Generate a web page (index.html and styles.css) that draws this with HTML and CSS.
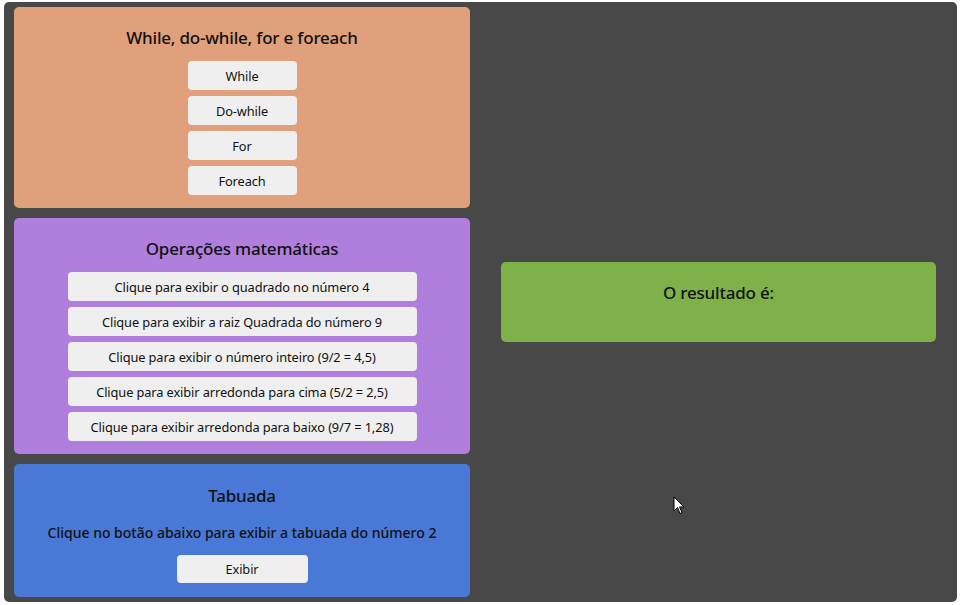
FILE: index.html
```html
<!DOCTYPE html>
<html lang="pt-BR">
<head>
<meta charset="utf-8">
<title>Estruturas</title>
<link rel="stylesheet" href="styles.css">
</head>
<body>
<main class="app">
  <section class="col-left">
    <div class="card card-orange">
      <h2 class="card-title">While, do-while, for e foreach</h2>
      <div class="btn-list">
        <button class="btn btn-small">While</button>
        <button class="btn btn-small">Do-while</button>
        <button class="btn btn-small">For</button>
        <button class="btn btn-small">Foreach</button>
      </div>
    </div>
    <div class="card card-purple">
      <h2 class="card-title">Operações matemáticas</h2>
      <div class="btn-list">
        <button class="btn btn-wide">Clique para exibir o quadrado no número 4</button>
        <button class="btn btn-wide">Clique para exibir a raiz Quadrada do número 9</button>
        <button class="btn btn-wide">Clique para exibir o número inteiro (9/2 = 4,5)</button>
        <button class="btn btn-wide">Clique para exibir arredonda para cima (5/2 = 2,5)</button>
        <button class="btn btn-wide">Clique para exibir arredonda para baixo (9/7 = 1,28)</button>
      </div>
    </div>
    <div class="card card-blue">
      <h2 class="card-title">Tabuada</h2>
      <p class="card-text">Clique no botão abaixo para exibir a tabuada do número 2</p>
      <div class="btn-list">
        <button class="btn btn-mid">Exibir</button>
      </div>
    </div>
  </section>
  <section class="col-right">
    <div class="result">
      <h2 class="card-title">O resultado é:</h2>
    </div>
  </section>
  <svg class="cursor" width="12" height="20" viewBox="0 0 12 20"><path d="M1 1 L1 15 L4.5 11.5 L7 17.5 L9 16.6 L6.6 11 L11 11 Z" fill="#fff" stroke="#000" stroke-width="1"/></svg>
</main>
</body>
</html>
```
FILE: styles.css
```css
html, body {
  margin: 0;
  padding: 0;
  background: #ffffff;
}
body {
  padding: 2px 3px 3px 4px;
  font-family: "Noto Sans", "Open Sans", sans-serif;
  color: #111;
}
.app {
  position: relative;
  box-sizing: border-box;
  width: 953px;
  height: 600px;
  background: #484848;
  border-radius: 5px;
  padding: 5px 0 5px 10px;
  display: flex;
  gap: 10px;
}
.col-left {
  width: 456px;
  display: flex;
  flex-direction: column;
  gap: 10px;
}
.col-right {
  flex: 1;
  display: flex;
  align-items: center;
  justify-content: center;
}
.card {
  border-radius: 5px;
  padding: 20px 0 13px;
  display: flex;
  flex-direction: column;
  align-items: center;
}
.card-orange { background: #e0a07b; }
.card-purple { background: #b07fdd; }
.card-blue { background: #4a78d6; padding-top: 21px; padding-bottom: 14px; }
.card-title {
  margin: 0 0 12px;
  font-size: 17px;
  line-height: 22px;
  font-weight: 500;
  text-align: center;
  letter-spacing: -0.2px;
}
.card-text {
  margin: 4px 0 12px;
  font-size: 14px;
  line-height: 20px;
  font-weight: 500;
  letter-spacing: 0;
}
.btn-list {
  display: flex;
  flex-direction: column;
  align-items: center;
  gap: 6px;
}
.btn {
  font-family: inherit;
  font-size: 12.8px;
  color: #111;
  background: #efefef;
  border: none;
  border-radius: 4px;
  height: 29px;
  padding: 0;
  letter-spacing: -0.1px;
}
.btn-small { width: 109px; }
.btn-wide { width: 349px; }
.btn-mid { width: 131px; height: 28px; }
.result {
  box-sizing: border-box;
  width: 435px;
  height: 80px;
  background: #7eb14a;
  border-radius: 5px;
  padding-top: 20px;
}
.cursor {
  position: absolute;
  left: 669px;
  top: 494px;
}
```
